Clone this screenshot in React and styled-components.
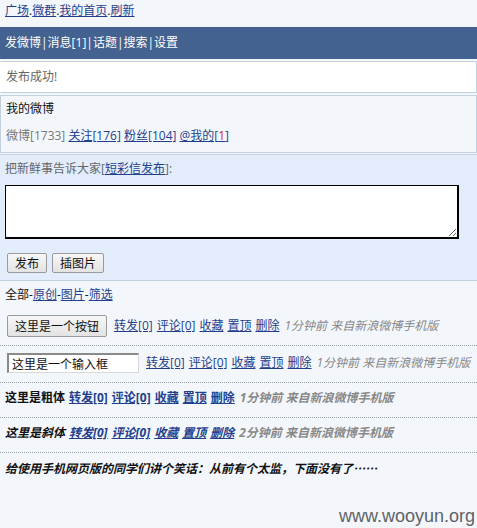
import React from 'react';
import styled, { createGlobalStyle, css } from 'styled-components';

const GlobalStyle = createGlobalStyle`
  html, body {
    margin: 0;
    padding: 0;
    background: #f3f7fc;
  }
  body {
    font-family: "Open Sans", "Noto Sans CJK SC", sans-serif;
    font-size: 12px;
    color: #111;
  }
`;

const Page = styled.div`
  position: relative;
  min-height: 528px;
  overflow: hidden;
`;

const Link = styled.a`
  color: #233f8c;
  text-decoration: underline;
  cursor: pointer;
`;

const Red = styled.span`
  color: #d01b1b;
`;

const TopNav = styled.div`
  height: 27px;
  box-sizing: border-box;
  padding: 2px 5px 0;
  line-height: 18px;
`;

const HeaderBar = styled.div`
  height: 32px;
  line-height: 31px;
  padding: 0 5px;
  background: #44628f;
  color: #fff;
`;

const Box = styled.div`
  margin-top: 2px;
  border: 1px solid #c3d0df;
  border-left-color: ${p => (p.$white ? '#fff' : '#c3d0df')};
  background: ${p => (p.$white ? '#fff' : '#f3f7fc')};
  padding: ${p => p.$pad || '0 5px'};
`;

const Notice = styled.div`
  height: 30px;
  line-height: 29px;
  color: #666;
`;

const Title = styled.div`
  line-height: 16px;
`;

const Stats = styled.div`
  margin-top: 11px;
  line-height: 16px;
  color: #777;
`;

const Publish = styled.div`
  margin-top: 1px;
  border-top: 1px solid #c3d0df;
  border-bottom: 1px solid #c3d0df;
  background: #e2ecfb;
  padding: 6px 5px 7px;
`;

const Prompt = styled.div`
  line-height: 16px;
  color: #666;
`;

const TextArea = styled.textarea`
  display: block;
  margin-top: 8px;
  width: 454px;
  height: 54px;
  box-sizing: border-box;
  border: 1px solid #000;
  border-right-width: 2px;
  border-bottom-width: 2px;
  background: #fff;
  resize: both;
`;

const ButtonRow = styled.div`
  display: flex;
  gap: 5px;
  margin-top: 14px;
  padding-left: 2px;
`;

const Button = styled.button`
  height: ${p => (p.$tall ? '22px' : '20px')};
  padding: 0 7px;
  border: 1px solid #9a9a9a;
  border-radius: 2px;
  background: linear-gradient(#f7f7f7, #e3e3e3);
  font-family: "Noto Sans CJK SC", sans-serif;
  font-size: 12px;
  color: #111;
  line-height: 18px;
`;

const FilterBar = styled.div`
  padding: 6px 5px 2px;
  line-height: 16px;
`;

const Post = styled.div`
  display: flex;
  align-items: center;
  gap: 4px;
  white-space: nowrap;
  padding: ${p => p.$pad || '6px 5px 10px'};
  line-height: 18px;
  border-bottom: ${p => (p.$last ? 'none' : '1px dotted #9aa0a8')};
  ${p => p.$bold && css`font-weight: bold;`}
  ${p => p.$italic && css`font-style: italic;`}
  ${p => p.$last && css`font-family: "Noto Sans CJK SC", sans-serif;`}
`;

const Input = styled.input`
  width: 132px;
  height: 20px;
  box-sizing: border-box;
  margin: 0 3px 0 2px;
  padding: 0 3px;
  border: 1px solid #d8d8d8;
  border-top: 2px solid #8a8a8a;
  border-left: 2px solid #8a8a8a;
  background: #fff;
  font-family: "Noto Sans CJK SC", sans-serif;
  font-size: 12px;
  color: #111;
`;

const Time = styled.span`
  color: #888;
  font-style: italic;
  font-size: 12px;
  margin-left: 1px;
`;

const Watermark = styled.div`
  position: absolute;
  right: 2px;
  bottom: 1px;
  font-family: "Liberation Sans", Arial, sans-serif;
  font-size: 18px;
  color: #5f6266;
  line-height: 22px;
`;

const Actions = ({ time = '1分钟前' }) => (
  <>
    <Link>转发[0]</Link>
    <Link>评论[0]</Link>
    <Link>收藏</Link>
    <Link>置顶</Link>
    <Link>删除</Link>
    <Time>{time} 来自新浪微博手机版</Time>
  </>
);

const App = () => (
  <Page>
    <GlobalStyle />
    <TopNav>
      <Link>广场</Link>.<Link>微群</Link>.<Link>我的首页</Link>.<Link>刷新</Link>
    </TopNav>
    <HeaderBar>发微博|消息[1]|话题|搜索|设置</HeaderBar>
    <Box $white>
      <Notice>发布成功!</Notice>
    </Box>
    <Box $pad="5px 5px 8px">
      <Title>我的微博</Title>
      <Stats>
        微博[1733] <Link>关注[176]</Link> <Link>粉丝[104]</Link> <Link>@我的[<Red>1</Red>]</Link>
      </Stats>
    </Box>
    <Publish>
      <Prompt>
        把新鲜事告诉大家[<Link>短彩信发布</Link>]:
      </Prompt>
      <TextArea />
      <ButtonRow>
        <Button>发布</Button>
        <Button>插图片</Button>
      </ButtonRow>
    </Publish>
    <FilterBar>
      全部-<Link>原创</Link>-<Link>图片</Link>-<Link>筛选</Link>
    </FilterBar>
    <Post $pad="10px 5px 8px">
      <Button $tall style={{ marginLeft: 2, marginRight: 3 }}>这里是一个按钮</Button>
      <Actions />
    </Post>
    <Post $pad="7px 5px 9px">
      <Input defaultValue="这里是一个输入框" />
      <Actions />
    </Post>
    <Post $bold>
      这里是粗体 <Actions />
    </Post>
    <Post $bold $italic>
      这里是斜体 <Actions time="2分钟前" />
    </Post>
    <Post $bold $italic $last>
      给使用手机网页版的同学们讲个笑话：从前有个太监，下面没有了……
    </Post>
    <Watermark>www.wooyun.org</Watermark>
  </Page>
);

export default App;
